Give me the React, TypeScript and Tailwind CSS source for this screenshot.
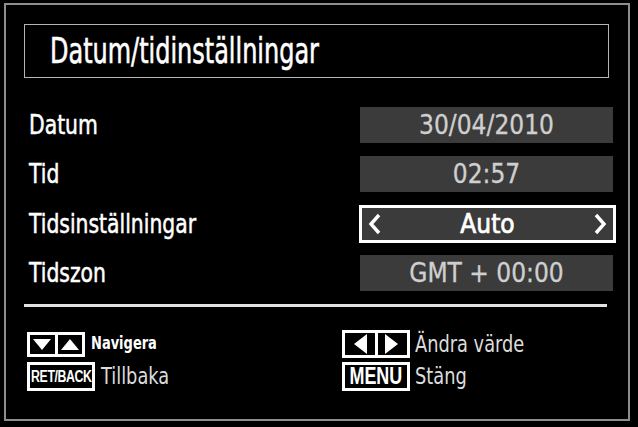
import React from "react";

const font = {
  fontFamily: '"Liberation Sans Narrow", "DejaVu Sans Condensed", "Liberation Sans", sans-serif',
};

interface Row {
  label: string;
  value: string;
  selected?: boolean;
}

const rows: Row[] = [
  { label: "Datum", value: "30/04/2010" },
  { label: "Tid", value: "02:57" },
  { label: "Tidsinställningar", value: "Auto", selected: true },
  { label: "Tidszon", value: "GMT + 00:00" },
];

type Dir = "up" | "down" | "left" | "right";

// filled white triangles inside the remote key boxes
const Tri = ({ dir }: { dir: Dir }) => {
  if (dir === "up" || dir === "down") {
    return (
      <svg width="20" height="14" viewBox="0 0 20 14">
        <polygon points={dir === "up" ? "1,13 19,13 10,2" : "1,2 19,2 10,13"} fill="#fff" />
      </svg>
    );
  }
  return (
    <svg width="16" height="22" viewBox="0 0 16 22">
      <polygon points={dir === "left" ? "15,1 15,21 2,11" : "1,1 1,21 14,11"} fill="#fff" />
    </svg>
  );
};

const KeyPair = ({ a, b, w, h }: { a: Dir; b: Dir; w: string; h: string }) => (
  <div className={`flex ${h} ${w} border-[3px] border-white bg-black`}>
    <div className="flex flex-1 items-center justify-center">
      <Tri dir={a} />
    </div>
    <div className="w-[3px] bg-white" />
    <div className="flex flex-1 items-center justify-center">
      <Tri dir={b} />
    </div>
  </div>
);

const TextKey = ({ text, cls }: { text: string; cls: string }) => (
  <div
    className="flex h-[29px] w-[68px] items-center justify-center overflow-hidden border-[3px] border-white bg-black font-bold text-white"
    style={{ fontFamily: '"Liberation Sans", Arial, sans-serif' }}
  >
    <span className={`inline-block leading-none ${cls}`}>{text}</span>
  </div>
);

export default function App() {
  return (
    <div className="h-[427px] w-[638px] overflow-hidden bg-black pl-[4px] pt-[3px]" style={font}>
      <div className="flex h-[418px] w-[626px] flex-col border-2 border-[#8e8e8e]">
        <div className="ml-[18px] mt-[19px] flex h-[54px] w-[585px] items-center border border-[#b5b5b5] pl-[25px]">
          <span className="inline-block origin-left scale-x-[0.74] text-[36px] leading-none text-white [-webkit-text-stroke:0.6px_#fff]">
            Datum/tidinställningar
          </span>
        </div>

        <div className="mt-[22px] flex flex-col">
          {rows.map((r) => (
            <div key={r.label} className="flex h-[49.5px] items-center">
              <div className="w-[354px] pl-[23px] text-[26px] leading-none text-white">
                <span className="inline-block origin-left scale-x-[0.87] [-webkit-text-stroke:0.5px_#fff]">
                  {r.label}
                </span>
              </div>
              {r.selected ? (
                <div className="-ml-px flex h-[38px] w-[257px] items-center justify-between border-[3px] border-white bg-[#3b3b3b] px-[5px] text-[26px] text-white">
                  <svg width="15" height="24" viewBox="0 0 15 24">
                    <polyline points="12,3 4,12 12,21" fill="none" stroke="#fff" strokeWidth="3.4" />
                  </svg>
                  <span className="inline-block leading-none [-webkit-text-stroke:0.7px_#fff]">{r.value}</span>
                  <svg width="15" height="24" viewBox="0 0 15 24">
                    <polyline points="3,3 11,12 3,21" fill="none" stroke="#fff" strokeWidth="3.4" />
                  </svg>
                </div>
              ) : (
                <div className="flex h-[36px] w-[253px] items-center justify-center bg-[#3b3b3b] text-[26px] leading-none text-[#cfcfcf]">
                  <span className="inline-block [-webkit-text-stroke:0.3px_#cfcfcf]">{r.value}</span>
                </div>
              )}
            </div>
          ))}
        </div>

        <div className="ml-[18px] mt-[6px] h-[3px] w-[583px] bg-[#e2e2e2]" />

        <div className="mt-[23px] flex">
          <div className="flex w-[336px] flex-col gap-[4px] pl-[21px]">
            <div className="flex h-[28px] items-center gap-[6px]">
              <KeyPair a="down" b="up" w="w-[58px]" h="h-[25px]" />
              <span className="inline-block origin-left scale-x-[0.85] text-[17px] font-bold text-white">
                Navigera
              </span>
            </div>
            <div className="flex h-[29px] items-center gap-[6px]">
              <TextKey text="RET/BACK" cls="scale-x-[0.77] text-[16px] tracking-[-0.5px]" />
              <span className="inline-block origin-left scale-x-[0.86] text-[23px] leading-none text-[#dcdcdc]">
                Tillbaka
              </span>
            </div>
          </div>
          <div className="flex flex-col gap-[4px]">
            <div className="flex h-[28px] items-center gap-[5px]">
              <KeyPair a="left" b="right" w="w-[68px]" h="h-[28px]" />
              <span className="inline-block origin-left scale-x-[0.86] text-[23px] leading-none text-[#dcdcdc]">
                Ändra värde
              </span>
            </div>
            <div className="flex h-[29px] items-center gap-[5px]">
              <TextKey text="MENU" cls="scale-x-[0.78] text-[23px]" />
              <span className="inline-block origin-left scale-x-[0.86] text-[23px] leading-none text-[#dcdcdc]">
                Stäng
              </span>
            </div>
          </div>
        </div>
      </div>
    </div>
  );
}
